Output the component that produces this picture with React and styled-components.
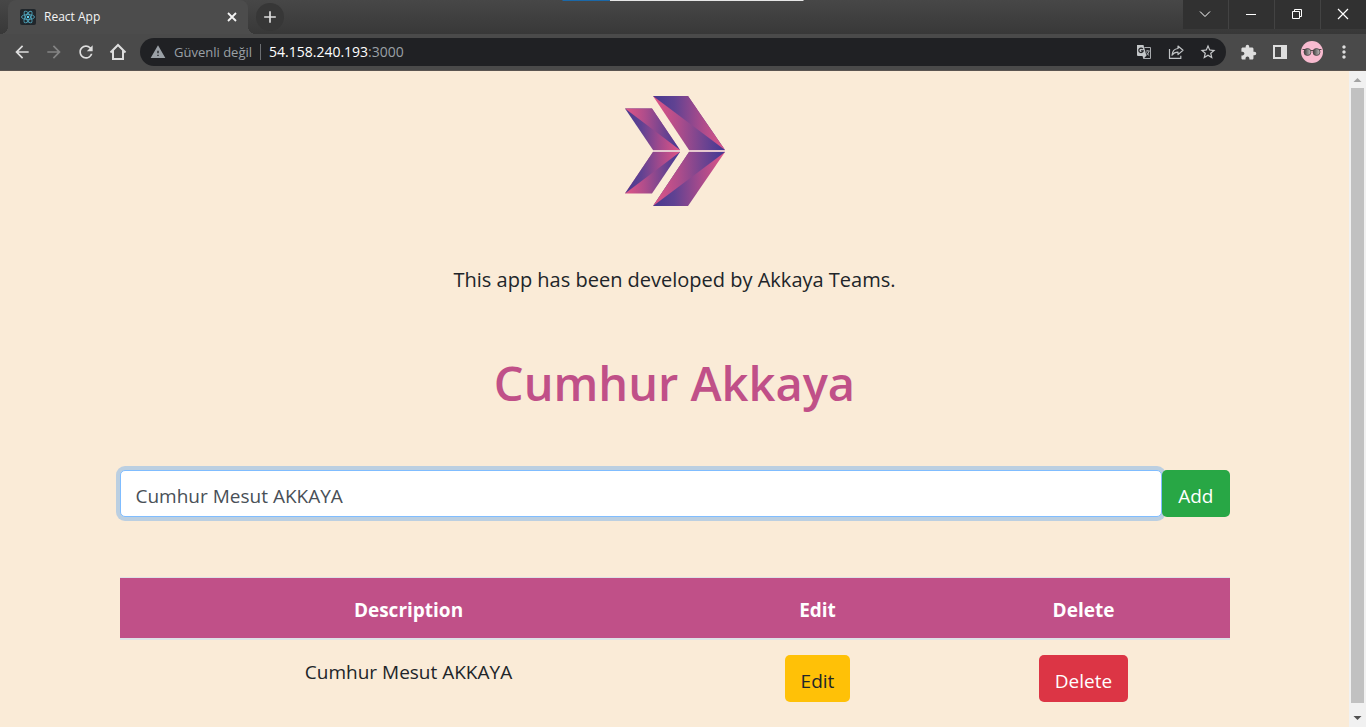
import React, { useState } from "react";
import styled, { createGlobalStyle } from "styled-components";
import {
  MdArrowBack,
  MdArrowForward,
  MdRefresh,
  MdExtension,
  MdStarBorder,
  MdWarning,
  MdMoreVert,
  MdAdd,
} from "react-icons/md";

const GlobalStyle = createGlobalStyle`
  *, *::before, *::after { box-sizing: border-box; }
  body {
    margin: 0;
    background: #faebd7;
    color: #212529;
    font-family: "Open Sans", "Noto Sans", sans-serif;
  }
  button, input { font-family: inherit; margin: 0; }
`;

const Shell = styled.div`
  display: flex;
  flex-direction: column;
  height: 100vh;
  overflow: hidden;
`;

/* ---------- browser frame ---------- */

const TabStrip = styled.header`
  position: relative;
  display: flex;
  align-items: flex-start;
  flex: none;
  height: 34px;
  padding-left: 8px;
  background: linear-gradient(#474747, #383838);
`;

const CaptureMarker = styled.div`
  position: absolute;
  top: 0;
  left: 50%;
  width: 241px;
  height: 1px;
  transform: translateX(-50%);
  background: linear-gradient(to right, #1b68a8 0 48px, #e6e6e6 48px);
`;

const Tab = styled.div`
  position: relative;
  display: flex;
  align-items: center;
  width: 240px;
  height: 34px;
  padding: 0 8px 0 12px;
  border-radius: 8px 8px 0 0;
  background: #4c4c4c;
  color: #f4f4f4;
  font-size: 12px;
  line-height: 16px;

  &::before,
  &::after {
    content: "";
    position: absolute;
    bottom: 0;
    width: 8px;
    height: 8px;
  }
  &::before {
    left: -8px;
    background: radial-gradient(circle at 0 0, transparent 8px, #4c4c4c 8px);
  }
  &::after {
    right: -8px;
    background: radial-gradient(circle at 100% 0, transparent 8px, #4c4c4c 8px);
  }
`;

const TabTitle = styled.span`
  flex: 1;
  padding-left: 8px;
`;

const IconButton = styled.button`
  display: flex;
  align-items: center;
  justify-content: center;
  flex: none;
  width: ${(p) => p.$size || 32}px;
  height: ${(p) => p.$size || 32}px;
  padding: 0;
  border: 0;
  border-radius: 50%;
  background: ${(p) => p.$fill || "transparent"};
  color: ${(p) => p.$color || "#dedede"};
`;

const NewTab = styled.div`
  padding: 3px 8px;
`;

const WindowControls = styled.div`
  display: flex;
  gap: 1px;
  margin-left: auto;
  background: #434343;
`;

const WindowButton = styled.button`
  display: flex;
  align-items: center;
  justify-content: center;
  width: 45px;
  height: 29px;
  padding: 0 2px 2px 0;
  border: 0;
  background: #313131;
  color: #ffffff;
`;

const Toolbar = styled.nav`
  display: flex;
  align-items: center;
  flex: none;
  height: 37px;
  padding: 0 6px;
  border-bottom: 1px solid #5a5450;
  background: #4a4a4a;
`;

const AddressBar = styled.div`
  display: flex;
  align-items: center;
  flex: 1;
  height: 28px;
  margin: 0 6px;
  padding: 0 2px 0 10px;
  border-radius: 14px;
  background: #202124;
  color: #9aa0a6;
  font-size: 14px;
  line-height: 20px;
`;

const Security = styled.span`
  padding: 0 8px;
  font-size: 13px;
`;

const Address = styled.span`
  flex: 1;
  padding-left: 8px;
  border-left: 1px solid #6b6e72;
  line-height: 16px;
`;

const Host = styled.span`
  color: #ffffff;
`;

/* ---------- page ---------- */

const Viewport = styled.div`
  display: flex;
  flex: 1;
  min-height: 0;
`;

const Page = styled.main`
  flex: 1;
  min-width: 0;
  padding: 25px 15px 0;
  overflow: hidden;
  text-align: center;
`;

const Container = styled.div`
  max-width: 1110px;
  margin: 0 auto;
`;

const Logo = styled.svg`
  display: block;
  width: 100px;
  height: 110px;
  margin: 0 auto;
`;

const Tagline = styled.h2`
  margin: 59px 0 0;
  color: #212529;
  font-size: 20px;
  font-weight: 500;
  line-height: 30px;
`;

const Title = styled.h1`
  margin: 57px 0 56px;
  color: #c05088;
  font-size: 47px;
  font-weight: 600;
  line-height: 62px;
`;

const Form = styled.form`
  display: flex;
`;

const TextField = styled.input`
  flex: 1;
  min-width: 0;
  height: 47px;
  padding: 4px 15px 0;
  border: 1px solid #80bdff;
  border-radius: 5px;
  outline: 0;
  box-shadow: 0 0 0 4px rgba(0, 123, 255, 0.25);
  background: #ffffff;
  color: #495057;
  font-size: 19px;
  line-height: 30px;
`;

const tones = {
  success: ["#28a745", "#ffffff"],
  warning: ["#ffc107", "#212529"],
  danger: ["#dc3545", "#ffffff"],
};

const Button = styled.button`
  position: relative;
  height: 47px;
  padding: 4px 16px 0;
  border: 0;
  border-radius: 5px;
  background: ${(p) => tones[p.$tone][0]};
  color: ${(p) => tones[p.$tone][1]};
  font-size: 19px;
  line-height: 30px;
`;

const Table = styled.table`
  width: 100%;
  margin-top: 60px;
  border-spacing: 0;
  table-layout: fixed;
  font-size: 19px;
  line-height: 30px;
`;

const HeadCell = styled.th`
  width: ${(p) => p.$width || "auto"};
  padding: 17px 15px 13px;
  border-top: 1px solid #dee2e6;
  border-bottom: 2px solid #dee2e6;
  background: #c05088;
  color: #ffffff;
  font-weight: 700;
`;

const Cell = styled.td`
  padding: ${(p) => (p.$text ? "17px 15px 13px" : "15px")};
  vertical-align: top;
`;

const ScrollTrack = styled.div`
  display: flex;
  flex-direction: column;
  flex: none;
  width: 17px;
  padding: 0 2px;
  background: #f1f1f1;
`;

const ScrollArrow = styled.svg`
  flex: none;
  width: 13px;
  height: 17px;
  fill: ${(p) => p.$color};
`;

const ScrollThumb = styled.div`
  flex: 1;
  margin-bottom: 7px;
  background: #c1c1c1;
`;

function Favicon() {
  return (
    <svg width="16" height="16" viewBox="0 0 16 16" aria-hidden="true">
      <rect width="16" height="16" rx="2" fill="#20262b" />
      <g fill="none" stroke="#4fa3ba" strokeWidth="0.9">
        <ellipse cx="8" cy="8" rx="6.5" ry="2.5" />
        <ellipse cx="8" cy="8" rx="6.5" ry="2.5" transform="rotate(60 8 8)" />
        <ellipse cx="8" cy="8" rx="6.5" ry="2.5" transform="rotate(120 8 8)" />
      </g>
      <circle cx="8" cy="8" r="1.2" fill="#61dafb" />
    </svg>
  );
}

function HomeIcon() {
  return (
    <svg width="18" height="18" viewBox="0 0 18 18" fill="none" stroke="currentColor" strokeWidth="2" aria-hidden="true">
      <path d="M1.5 9.5 9 2l7.5 7.5M4 7.5V16h10V7.5" />
    </svg>
  );
}

function TranslateIcon() {
  return (
    <svg width="16" height="16" viewBox="0 0 16 16" aria-hidden="true">
      <path d="M8.500 3.500h6v11H7.500" fill="none" stroke="#a8abae" />
      <path d="M1 1h6.500l3 11H2a1 1 0 0 1-1-1z" fill="#c4c7c9" />
      <path d="M10 12l-2.500 3-1-3z" fill="#c4c7c9" />
      <path d="M6.800 5A2.200 2.200 0 1 0 7.200 6.800H5" fill="none" stroke="#202124" strokeWidth="1.2" />
      <path d="M9.800 7h4M11.800 6v1M13 7.200c-.4 1.800-1.200 3-2.500 4M10.600 8.300c.6 1.400 1.300 2.400 2.600 3.200" fill="none" stroke="#a8abae" />
    </svg>
  );
}

function ShareIcon() {
  return (
    <svg width="16" height="16" viewBox="0 0 16 16" fill="none" stroke="#c0c3c5" strokeWidth="1.2" strokeLinejoin="round" aria-hidden="true">
      <path d="M1.500 5v9.400h11.300v-2.600" />
      <path d="M10 2l5 4.300-5 4.300V8.200C7.300 8.200 5.500 9 4 11.200 4.300 7.800 6 4.900 10 4.500z" />
    </svg>
  );
}

function Avatar() {
  return (
    <svg width="22" height="22" viewBox="0 0 22 22" aria-hidden="true">
      <defs>
        <linearGradient id="lens" x1="0" y1="0" x2="1" y2="0">
          <stop offset="0" stopColor="#3c3c3c" />
          <stop offset="1" stopColor="#c4bfc0" />
        </linearGradient>
      </defs>
      <circle cx="11" cy="11" r="11" fill="#f8bbd0" />
      <path d="M1.500 8.500h3M9 9.500h4M17.500 8.500h3" stroke="#55464b" strokeWidth="1.200" />
      <circle cx="6.500" cy="11" r="3.500" fill="url(#lens)" stroke="#4b4245" strokeWidth="0.800" />
      <circle cx="15.500" cy="11" r="3.500" fill="url(#lens)" stroke="#4b4245" strokeWidth="0.800" />
    </svg>
  );
}

function BrandLogo() {
  return (
    <Logo viewBox="0 0 100 110" role="img" aria-label="Akkaya Teams">
      <defs>
        <linearGradient id="blueToPink">
          <stop offset="0" stopColor="#46398f" />
          <stop offset="0.300" stopColor="#604292" />
          <stop offset="0.650" stopColor="#a54a8c" />
          <stop offset="1" stopColor="#e05586" />
        </linearGradient>
        <linearGradient id="pinkToBlue">
          <stop offset="0" stopColor="#e05586" />
          <stop offset="0.350" stopColor="#b04d8b" />
          <stop offset="0.700" stopColor="#704490" />
          <stop offset="1" stopColor="#403894" />
        </linearGradient>
      </defs>
      <path d="M28 0H63L100 54H64z" fill="url(#pinkToBlue)" />
      <path d="M28 0H63L100 54z" fill="url(#blueToPink)" />
      <path d="M64 56H100L63 110H28z" fill="url(#blueToPink)" />
      <path d="M64 56H100L28 110z" fill="url(#pinkToBlue)" />
      <path d="M0 12.500H27L55 54H28z" fill="url(#blueToPink)" />
      <path d="M0 12.500H27L55 54z" fill="url(#pinkToBlue)" />
      <path d="M28 56H55L27 97.500H0z" fill="url(#pinkToBlue)" />
      <path d="M28 56H55L0 97.500z" fill="url(#blueToPink)" />
      <path d="M28 55H55M64 55H100" stroke="#e6c9cf" strokeWidth="2" />
    </Logo>
  );
}

function BrowserFrame() {
  return (
    <>
      <TabStrip>
        <CaptureMarker />
        <Tab>
          <Favicon />
          <TabTitle>React App</TabTitle>
          <IconButton $size={16} $color="#f4f4f4" aria-label="Close tab">
            <svg width="10" height="10" viewBox="0 0 10 10" stroke="currentColor" strokeWidth="1.800"><path d="M1 1l8 8M9 1 1 9" /></svg>
          </IconButton>
        </Tab>
        <NewTab>
          <IconButton $size={28} $fill="#373737" aria-label="New tab">
            <MdAdd size={20} />
          </IconButton>
        </NewTab>
        <WindowControls>
          <WindowButton aria-label="Search tabs">
            <svg width="12" height="12" fill="none" stroke="currentColor"><path d="M1 3.500 6 8.500l5-5" /></svg>
          </WindowButton>
          <WindowButton aria-label="Minimize">
            <svg width="12" height="12" fill="none" stroke="currentColor"><path d="M1 6.500h10" /></svg>
          </WindowButton>
          <WindowButton aria-label="Restore">
            <svg width="12" height="12" fill="none" stroke="currentColor"><path d="M1.500 3.500h7v7h-7zM3.500 3.500v-2h7v7h-2" /></svg>
          </WindowButton>
          <WindowButton aria-label="Close">
            <svg width="12" height="12" fill="none" stroke="currentColor" strokeWidth="1.200"><path d="M1 1l10 10M11 1 1 11" /></svg>
          </WindowButton>
        </WindowControls>
      </TabStrip>
      <Toolbar>
        <IconButton aria-label="Back"><MdArrowBack size={20} /></IconButton>
        <IconButton aria-label="Forward" $color="#848484"><MdArrowForward size={20} /></IconButton>
        <IconButton aria-label="Reload"><MdRefresh size={20} /></IconButton>
        <IconButton aria-label="Home"><HomeIcon /></IconButton>
        <AddressBar>
          <MdWarning size={16} />
          <Security>Güvenli değil</Security>
          <Address>
            <Host>54.158.240.193</Host>:3000
          </Address>
          <IconButton aria-label="Translate"><TranslateIcon /></IconButton>
          <IconButton aria-label="Share"><ShareIcon /></IconButton>
          <IconButton aria-label="Bookmark" $color="#c8cacc"><MdStarBorder size={18} /></IconButton>
        </AddressBar>
        <IconButton aria-label="Extensions"><MdExtension size={17} /></IconButton>
        <IconButton aria-label="Side panel">
          <svg width="14" height="14"><path d="M0 0h14v14H0zM2 2v10h6V2z" fill="currentColor" fillRule="evenodd" /></svg>
        </IconButton>
        <IconButton aria-label="Profile"><Avatar /></IconButton>
        <IconButton aria-label="Menu"><MdMoreVert size={20} /></IconButton>
      </Toolbar>
    </>
  );
}

export default function App() {
  const [text, setText] = useState("Cumhur Mesut AKKAYA");
  const todos = ["Cumhur Mesut AKKAYA"];

  return (
    <Shell>
      <GlobalStyle />
      <BrowserFrame />
      <Viewport>
        <Page>
          <Container>
            <BrandLogo />
            <Tagline>This app has been developed by Akkaya Teams.</Tagline>
            <Title>Cumhur Akkaya</Title>
            <Form onSubmit={(e) => e.preventDefault()}>
              <TextField
                type="text"
                aria-label="Description"
                value={text}
                onChange={(e) => setText(e.target.value)}
              />
              <Button $tone="success">Add</Button>
            </Form>
            <Table>
              <thead>
                <tr>
                  <HeadCell>Description</HeadCell>
                  <HeadCell $width="240px">Edit</HeadCell>
                  <HeadCell $width="292px">Delete</HeadCell>
                </tr>
              </thead>
              <tbody>
                {todos.map((todo) => (
                  <tr key={todo}>
                    <Cell $text>{todo}</Cell>
                    <Cell><Button $tone="warning">Edit</Button></Cell>
                    <Cell><Button $tone="danger">Delete</Button></Cell>
                  </tr>
                ))}
              </tbody>
            </Table>
          </Container>
        </Page>
        <ScrollTrack aria-hidden="true">
          <ScrollArrow $color="#a3a3a3" viewBox="0 0 13 17"><path d="M2.500 11 6.500 7l4 4z" /></ScrollArrow>
          <ScrollThumb />
          <ScrollArrow $color="#505050" viewBox="0 0 13 17"><path d="M2.500 6l4 4 4-4z" /></ScrollArrow>
        </ScrollTrack>
      </Viewport>
    </Shell>
  );
}
